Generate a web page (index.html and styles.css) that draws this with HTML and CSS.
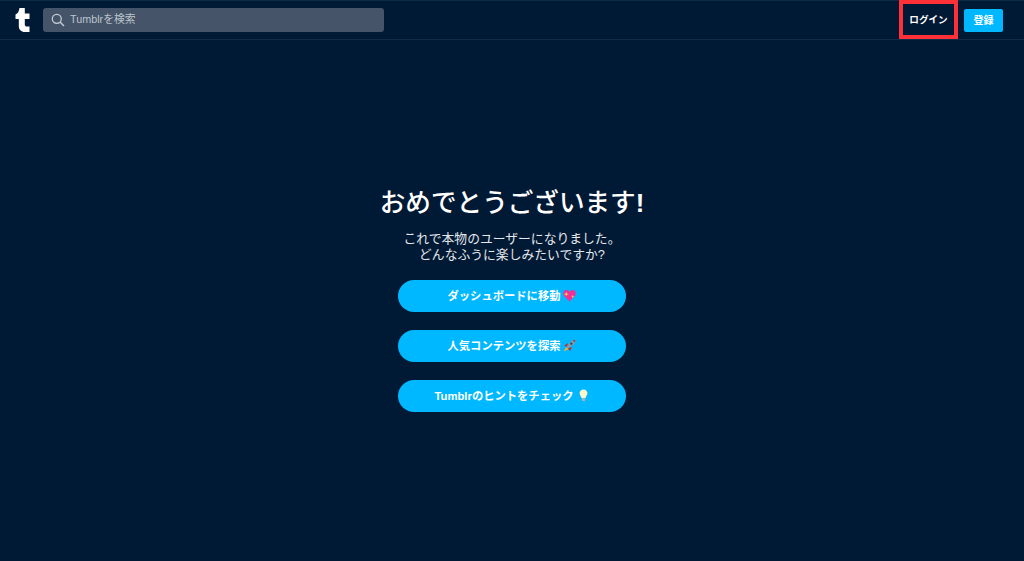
FILE: index.html
```html
<!DOCTYPE html>
<html lang="ja">

<head>
    <meta charset="UTF-8">
    <meta name="viewport" content="width=device-width, initial-scale=1.0">
    <title>Tumblr</title>
    <link rel="stylesheet" href="styles.css">
</head>

<body>
    <header class="topbar">
        <a class="logo" href="#" aria-label="Tumblr">
            <svg viewBox="0 0 15 24" width="15" height="24">
                <path d="M4.500 0H9.800V5.500H14.500V11H9.800V16.500C9.800 18 10.800 18.600 12 18.600H14.500V24H10C6 24 3.800 21.500 3.800 18V11H.5V6.500C2.800 5.500 4 3.500 4.500 0z" fill="#FFFFFF"/>
            </svg>
        </a>
        <div class="search">
            <svg class="search-icon" viewBox="0 0 14 14" width="14" height="14">
                <circle cx="5.800" cy="5.800" r="4.500" fill="none" stroke="currentColor" stroke-width="1.300"/>
                <path d="M9 9l4 4" fill="none" stroke="currentColor" stroke-width="1.500"/>
            </svg>
            <span>Tumblrを検索</span>
        </div>
        <a class="login" href="#">ログイン</a>
        <a class="signup" href="#">登録</a>
    </header>

    <main class="content">
        <h1>おめでとうございます<b>!</b></h1>
        <p>これで本物のユーザーになりました。<br>どんなふうに楽しみたいですか?</p>
        <a class="pill" href="#">ダッシュボードに移動
            <svg class="emoji" viewBox="0 0 14 14" width="13" height="13">
                <path d="M7 13.500L1.200 7.500C-.6 5 .4 1.200 3.400 1 5 .9 6.300 1.800 7 3 7.700 1.800 9 .9 10.600 1 13.600 1.200 14.600 5 12.800 7.500z" fill="#f42f98"/>
                <path d="M3.500 3l.7 1.900 1.900.7-1.900.7-.7 1.900-.7-1.900-1.900-.7 1.900-.7z" fill="#ffd84a"/>
                <path d="M10.500 6.500l.5 1.200 1.200.5-1.200.5-.5 1.200-.5-1.200-1.200-.5 1.200-.5z" fill="#ffd84a"/>
            </svg>
        </a>
        <a class="pill" href="#">人気コンテンツを探索
            <svg class="emoji" viewBox="0 0 14 14" width="13" height="13">
                <path d="M3.500 8.500L.8 13.500l5-2.500z" fill="#f5b324"/>
                <path d="M1.500 7L5.500 4.300 4 8.500zM7.500 12.800L9.700 8.500 5.500 10z" fill="#d4211f"/>
                <path d="M4 8.500L9 2.500 13.200.8l-1 4.700L5.500 10z" fill="#8d97a5"/>
                <path d="M10.400 1.900L13.200.8l-.6 2.800z" fill="#d4211f"/>
                <circle cx="9" cy="5" r="1.200" fill="#223c63"/>
            </svg>
        </a>
        <a class="pill" href="#">Tumblrのヒントをチェック
            <svg class="emoji" viewBox="0 0 14 14" width="13" height="13">
                <path d="M7 .5C4.200.5 2.800 2.600 2.800 4.600c0 2 1.700 3.200 2.200 5.400h4c.5-2.200 2.200-3.400 2.200-5.400C11.200 2.600 9.800.5 7 .5z" fill="#fff6c9"/>
                <rect x="5.200" y="10.200" width="3.600" height="2.800" rx=".8" fill="#a9b2b8"/>
            </svg>
        </a>
    </main>
</body>

</html>
```

FILE: styles.css
```css
* {
    box-sizing: border-box;
}

html,
body {
    height: 100%;
}

body {
    background-color: #001935;
    color: #FFFFFF;
    font-family: "Liberation Sans", "Noto Sans CJK JP", sans-serif;
    margin: 0;
    overflow: hidden;
}

a {
    color: #FFFFFF;
    text-decoration: none;
}

.topbar {
    display: flex;
    align-items: center;
    height: 40px;
    padding: 0 21px 0 15px;
    border-top: 1px solid #0b2a44;
    border-bottom: 1px solid #0f2c49;
}

.logo {
    display: flex;
    margin-right: 13px;
}

.search {
    display: flex;
    align-items: center;
    gap: 5px;
    width: 341px;
    height: 24px;
    padding-left: 8px;
    border-radius: 3px;
    background-color: #455468;
    color: #bcc3cc;
    font-size: 10.800px;
    line-height: 22px;
}

.search span {
    padding-bottom: 2px;
}

.search-icon {
    color: #c5ccd4;
}

.login {
    display: flex;
    align-items: center;
    justify-content: center;
    width: 59px;
    height: 39px;
    margin-left: auto;
    margin-top: -1px;
    padding-bottom: 2px;
    border: 4px solid #ff3038;
    font-size: 9.600px;
    font-weight: 700;
}

.signup {
    display: flex;
    align-items: center;
    justify-content: center;
    width: 39px;
    height: 23px;
    margin-left: 6px;
    padding-bottom: 2px;
    border-radius: 2px;
    background-color: #00b8ff;
    font-size: 10px;
    font-weight: 700;
}

.content {
    display: flex;
    flex-direction: column;
    align-items: center;
    padding-top: 146px;
}

.content h1 {
    margin: 0;
    font-size: 25.600px;
    font-weight: 500;
    line-height: 34px;
}

.content p {
    margin: 11px 0 17px;
    color: #e4e7eb;
    font-size: 12.800px;
    line-height: 16px;
    text-align: center;
}

.pill {
    display: flex;
    align-items: center;
    justify-content: center;
    gap: 3px;
    width: 228px;
    height: 32px;
    margin-bottom: 18px;
    padding-bottom: 2px;
    border-radius: 16px;
    background-color: #00b8ff;
    font-size: 11.300px;
    font-weight: 700;
}
```
